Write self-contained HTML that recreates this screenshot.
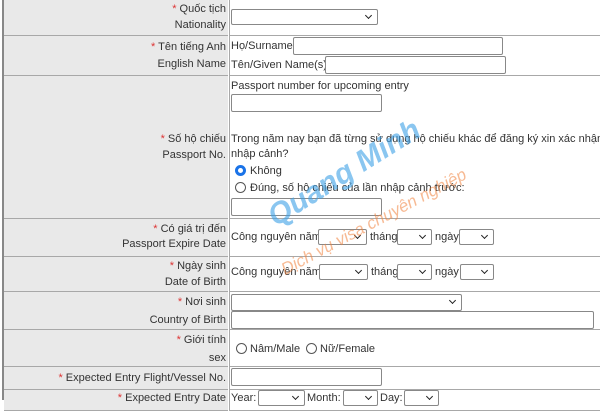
<!DOCTYPE html>
<html><head><meta charset="utf-8"><style>
body{margin:0;width:600px;height:400px;overflow:hidden;background:#fff;font-family:"Liberation Sans",Arial,sans-serif;font-size:11px;color:#333;position:relative}
.a{position:absolute;white-space:nowrap}
.lab{position:absolute;left:4px;width:224px;background:#e9e9e9;border-bottom:1px solid #a8a8a8}
.val{position:absolute;left:229px;right:0;border-bottom:1px solid #a8a8a8;border-left:1px solid #a8a8a8}
.r{text-align:right;right:374px}
.s{color:#d33}
.in{position:absolute;border:1px solid #888;border-radius:2px;background:#fff;box-sizing:border-box}
.sel{position:absolute;border:1px solid #888;border-radius:2px;background:#fff;box-sizing:border-box}
.sel:after{content:"";position:absolute;right:6px;top:3px;width:4px;height:4px;border-right:1.5px solid #222;border-bottom:1.5px solid #222;transform:rotate(45deg)}
.rad{position:absolute;width:11px;height:11px;border:1px solid #555;border-radius:50%;box-sizing:border-box;background:#fff}
</style></head><body>
<div style="position:absolute;left:2px;top:0;width:2px;height:400px;background:#888"></div>
<div class="lab" style="top:0;height:35px"></div><div class="val" style="top:0;height:35px"></div>
<div class="lab" style="top:36px;height:39px"></div><div class="val" style="top:36px;height:39px"></div>
<div class="lab" style="top:76px;height:142px"></div><div class="val" style="top:76px;height:142px"></div>
<div class="lab" style="top:219px;height:37px"></div><div class="val" style="top:219px;height:37px"></div>
<div class="lab" style="top:257px;height:34px"></div><div class="val" style="top:257px;height:34px"></div>
<div class="lab" style="top:292px;height:37px"></div><div class="val" style="top:292px;height:37px"></div>
<div class="lab" style="top:330px;height:36px"></div><div class="val" style="top:330px;height:36px"></div>
<div class="lab" style="top:367px;height:22px"></div><div class="val" style="top:367px;height:22px"></div>
<div class="lab" style="top:390px;height:20px"></div><div class="val" style="top:390px;height:20px"></div>

<div class="a r" style="top:3px"><span class="s">*</span> Quốc tịch</div>
<div class="a r" style="top:19px">Nationality</div>
<div class="sel" style="left:231px;top:9px;width:147px;height:16px"></div>

<div class="a r" style="top:41px"><span class="s">*</span> Tên tiếng Anh</div>
<div class="a r" style="top:58px">English Name</div>
<div class="a" style="left:231px;top:40px">Họ/Surname</div>
<div class="in" style="left:293px;top:37px;width:210px;height:18px"></div>
<div class="a" style="left:231px;top:59px">Tên/Given Name(s)</div>
<div class="in" style="left:325px;top:56px;width:181px;height:18px"></div>

<div class="a" style="left:231px;top:80px">Passport number for upcoming entry</div>
<div class="in" style="left:231px;top:94px;width:151px;height:18px"></div>
<div class="a r" style="top:133px"><span class="s">*</span> Số hộ chiếu</div>
<div class="a r" style="top:149px">Passport No.</div>
<div class="a" style="left:231px;top:133px">Trong năm nay bạn đã từng sử dụng hộ chiếu khác để đăng ký xin xác nhận</div>
<div class="a" style="left:231px;top:148px">nhập cảnh?</div>
<div class="rad" style="left:235px;top:165px;border:3px solid #1a73e8"></div>
<div class="a" style="left:250px;top:165px">Không</div>
<div class="rad" style="left:235px;top:182px"></div>
<div class="a" style="left:250px;top:182px">Đúng, số hộ chiếu của lần nhập cảnh trước:</div>
<div class="in" style="left:231px;top:198px;width:151px;height:18px"></div>

<div class="a r" style="top:223px"><span class="s">*</span> Có giá trị đến</div>
<div class="a r" style="top:238px">Passport Expire Date</div>
<div class="a" style="left:231px;top:231px">Công nguyên năm</div>
<div class="sel" style="left:318px;top:229px;width:49px;height:16px"></div>
<div class="a" style="left:370px;top:231px">tháng</div>
<div class="sel" style="left:397px;top:229px;width:35px;height:16px"></div>
<div class="a" style="left:435px;top:231px">ngày</div>
<div class="sel" style="left:459px;top:229px;width:35px;height:16px"></div>

<div class="a r" style="top:260px"><span class="s">*</span> Ngày sinh</div>
<div class="a r" style="top:276px">Date of Birth</div>
<div class="a" style="left:231px;top:266px">Công nguyên năm</div>
<div class="sel" style="left:319px;top:264px;width:49px;height:16px"></div>
<div class="a" style="left:371px;top:266px">tháng</div>
<div class="sel" style="left:397px;top:264px;width:35px;height:16px"></div>
<div class="a" style="left:435px;top:266px">ngày</div>
<div class="sel" style="left:460px;top:264px;width:34px;height:16px"></div>

<div class="a r" style="top:296px"><span class="s">*</span> Nơi sinh</div>
<div class="a r" style="top:314px">Country of Birth</div>
<div class="sel" style="left:231px;top:294px;width:231px;height:17px"></div>
<div class="in" style="left:231px;top:311px;width:363px;height:18px"></div>

<div class="a r" style="top:334px"><span class="s">*</span> Giới tính</div>
<div class="a r" style="top:352px">sex</div>
<div class="rad" style="left:236px;top:343px"></div>
<div class="a" style="left:250px;top:343px">Nâm/Male</div>
<div class="rad" style="left:306px;top:343px"></div>
<div class="a" style="left:320px;top:343px">Nữ/Female</div>

<div class="a r" style="top:372px"><span class="s">*</span> Expected Entry Flight/Vessel No.</div>
<div class="in" style="left:231px;top:368px;width:151px;height:18px"></div>

<div class="a r" style="top:392px"><span class="s">*</span> Expected Entry Date</div>
<div class="a" style="left:231px;top:392px">Year:</div>
<div class="sel" style="left:258px;top:390px;width:47px;height:16px"></div>
<div class="a" style="left:307px;top:392px">Month:</div>
<div class="sel" style="left:343px;top:390px;width:35px;height:16px"></div>
<div class="a" style="left:380px;top:392px">Day:</div>
<div class="sel" style="left:404px;top:390px;width:35px;height:16px"></div>

<div class="a" style="left:262px;top:205px;transform:rotate(-32deg);transform-origin:left top;font:bold italic 30px 'Liberation Sans',sans-serif;color:rgba(60,160,230,0.6)">Quang Minh</div>
<div class="a" style="left:278px;top:262px;transform:rotate(-28deg);transform-origin:left top;font:italic 17px 'Liberation Sans',sans-serif;color:rgba(240,130,60,0.55)">Dịch vụ visa chuyên nghiệp</div>
</body></html>
